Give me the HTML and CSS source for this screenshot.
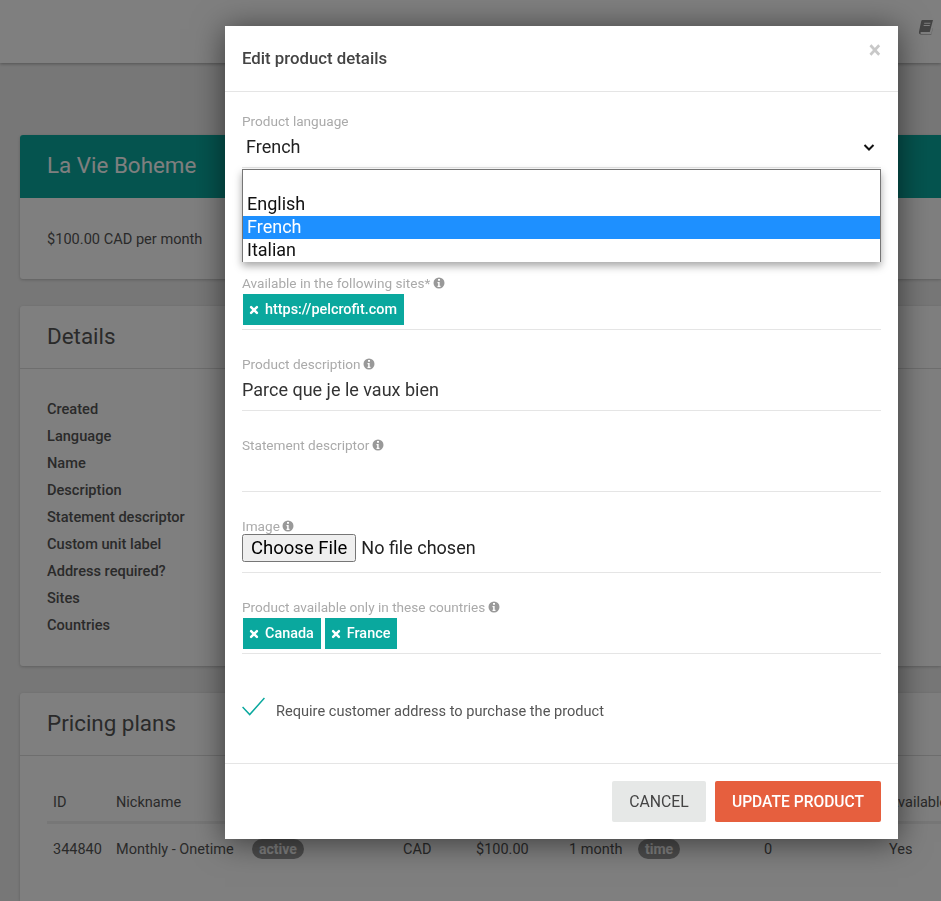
FILE: index.html
```html
<!DOCTYPE html>
<html lang="en">
<head>
<meta charset="utf-8">
<title>Edit product details</title>
<link rel="stylesheet" href="styles.css">
</head>
<body>
<svg class="sprite" width="0" height="0" aria-hidden="true">
  <symbol id="info" viewBox="0 0 24 24"><path fill="currentColor" fill-rule="evenodd" d="M12 1a11 11 0 1 0 0 22 11 11 0 0 0 0-22zM14 3.800v3.700h-4V3.800h4zM15 20H9v-2.300h1.300v-5.400H9V10h4.300v7.700H15V20z"/></symbol>
  <symbol id="times" viewBox="0 0 12 12"><path d="M2.500 2.500l7 7M9.500 2.500l-7 7" stroke="currentColor" stroke-width="3" stroke-linecap="round"/></symbol>
</svg>

<div class="page">
  <header class="navbar">
    <svg class="book" viewBox="0 0 16 16" aria-hidden="true"><path fill="currentColor" fill-rule="evenodd" d="M4.500 1H15l-.4 1.500-2.800 10.500H3.600c-.8 0-1.200.4-1.200 1s.4.900 1 .9h9.800l1.500-5.500.4-.6-1.800 6.700H3c-1.500 0-2.300-1-2-2.700L3.200 2.200C3.400 1.400 3.800 1 4.500 1zM6.300 3.800l-.2.900h6.200l.2-.9H6.300zM5.700 6l-.2.900h6.200l.2-.9H5.700z"/></svg>
  </header>
  <main class="main">
    <section class="card card-summary">
      <h1 class="banner">La Vie Boheme</h1>
      <p class="price">$100.00 CAD per month</p>
    </section>
    <section class="card card-details">
      <h2 class="card-title">Details</h2>
      <ul class="detail-list">
        <li>Created</li>
        <li>Language</li>
        <li>Name</li>
        <li>Description</li>
        <li>Statement descriptor</li>
        <li>Custom unit label</li>
        <li>Address required?</li>
        <li>Sites</li>
        <li>Countries</li>
      </ul>
    </section>
    <section class="card card-plans">
      <h2 class="card-title">Pricing plans</h2>
      <div class="plans">
        <div class="plan-row plan-head">
          <span>ID</span><span>Nickname</span><span></span><span></span><span></span><span></span><span></span><span></span><span>Available</span>
        </div>
        <div class="plan-row">
          <span>344840</span><span>Monthly - Onetime</span><span><b class="pill">active</b></span><span>CAD</span><span>$100.00</span><span>1 month</span><span><b class="pill">time</b></span><span>0</span><span>Yes</span>
        </div>
      </div>
    </section>
  </main>
</div>

<div class="overlay"></div>

<div class="modal" role="dialog">
  <div class="modal-head">
    <h3 class="modal-title">Edit product details</h3>
    <span class="close">×</span>
  </div>
  <form class="modal-body">
    <div class="select-field">
      <label class="field-label">Product language</label>
      <div class="select-value">French
        <svg class="chevron" viewBox="0 0 12 12" aria-hidden="true"><path d="M1.500 4l4.500 4.500L10.500 4" fill="none" stroke="currentColor" stroke-width="2"/></svg>
      </div>
      <ul class="listbox">
        <li class="option"></li>
        <li class="option">English</li>
        <li class="option selected">French</li>
        <li class="option">Italian</li>
      </ul>
    </div>
    <div class="field"></div>
    <div class="field">
      <label class="field-label">Available in the following sites* <svg class="info"><use href="#info"/></svg></label>
      <div class="chips">
        <span class="chip"><svg class="chip-x"><use href="#times"/></svg>https://pelcrofit.com</span>
      </div>
    </div>
    <div class="field">
      <label class="field-label">Product description <svg class="info"><use href="#info"/></svg></label>
      <div class="field-text">Parce que je le vaux bien</div>
    </div>
    <div class="field">
      <label class="field-label">Statement descriptor <svg class="info"><use href="#info"/></svg></label>
      <div class="field-text"></div>
    </div>
    <div class="field">
      <label class="field-label">Image <svg class="info"><use href="#info"/></svg></label>
      <input class="file" type="file">
    </div>
    <div class="field">
      <label class="field-label">Product available only in these countries <svg class="info"><use href="#info"/></svg></label>
      <div class="chips">
        <span class="chip"><svg class="chip-x"><use href="#times"/></svg>Canada</span>
        <span class="chip"><svg class="chip-x"><use href="#times"/></svg>France</span>
      </div>
    </div>
    <div class="check-row">
      <svg class="check" viewBox="0 0 26 20" aria-hidden="true"><path d="M1.500 10.500L9 18.500 24.500 1" fill="none" stroke="currentColor" stroke-width="1.500"/></svg>
      <span>Require customer address to purchase the product</span>
    </div>
  </form>
  <div class="modal-foot">
    <button class="btn btn-cancel" type="button">CANCEL</button>
    <button class="btn btn-update" type="button">UPDATE PRODUCT</button>
  </div>
</div>
</body>
</html>
```
FILE: styles.css
```css
* { box-sizing: border-box; }
html, body { margin: 0; height: 100%; overflow: hidden; }
body { background: #eeeeee; font-family: Roboto, "Liberation Sans", sans-serif; color: #555; font-size: 14px; }
.sprite { position: absolute; }

.page { width: 941px; height: 901px; overflow: hidden; }
.navbar { height: 63px; background: #fff; box-shadow: 0 1px 3px rgba(0,0,0,.3); display: flex; align-items: flex-start; padding: 19px 0 0 918px; }
.book { width: 16px; height: 16px; color: #888; }
.main { padding: 72px 0 0 20px; display: flex; flex-direction: column; gap: 27px; }
.card { background: #fff; border-radius: 3px 0 0 3px; box-shadow: 0 1px 3px rgba(0,0,0,.2); overflow: hidden; }
.card-summary { height: 144px; }
.card-details { height: 360px; }
.card-plans { height: 208px; border-radius: 3px 0 0 0; }
.banner { margin: 0; height: 63px; background: #0aa89e; color: #fff; font-size: 22.400px; font-weight: 400; line-height: 61px; padding-left: 27px; }
.price { margin: 0; padding: 31px 27px; line-height: 20px; font-size: 14.600px; }
.card-title { margin: 0; height: 63px; border-bottom: 1px solid #ddd; font-size: 22.400px; font-weight: 400; line-height: 60px; padding-left: 27px; }
.detail-list { list-style: none; margin: 0; padding: 27px 27px 0; }
.detail-list li { height: 27px; line-height: 27px; font-weight: 500; font-size: 14.600px; }
.plans { padding: 27px 0 0 27px; }
.plan-row { display: grid; grid-template-columns: 63px 136px 151px 73px 93px 69px 126px 125px 100px; width: 914px; height: 50px; align-items: center; white-space: nowrap; font-size: 14.500px; }
.plan-row > span { padding-left: 6px; }
.plan-head { height: 41px; border-bottom: 3px solid #eee; }
.pill { display: inline-block; height: 20px; line-height: 20px; padding: 0 7px; border-radius: 10px; background: #999; color: #fff; font-size: 14px; font-weight: 700; }

.overlay { position: fixed; inset: 0; background: rgba(0,0,0,.5); }

.modal { position: absolute; left: 225px; top: 26px; width: 673px; height: 813px; background: #fff; box-shadow: 0 3px 30px rgba(0,0,0,.55); display: flex; flex-direction: column; }
.modal-head { height: 66px; border-bottom: 1px solid #e5e5e5; padding: 0 17px 2px; display: flex; justify-content: space-between; align-items: center; position: relative; }
.modal-title { margin: 0; font-size: 16.800px; font-weight: 500; color: #444; }
.close { position: absolute; right: 17px; top: 13px; font-size: 23px; font-weight: 700; color: #c8c8c8; line-height: 24px; }
.modal-body { flex: 1; padding: 20px 17px 0; }
.field-label { display: block; height: 20px; line-height: 18px; color: #aaa; font-size: 13.600px; white-space: nowrap; }
.info { width: 12px; height: 12px; color: #999; vertical-align: -1px; margin-left: -1px; }
.select-field { position: relative; height: 56px; border-bottom: 1px solid #e5e5e5; }
.select-value { height: 32px; margin-top: -1px; line-height: 32px; padding-left: 4px; font-size: 18px; color: #222; display: flex; justify-content: space-between; align-items: center; padding-right: 6px; }
.chevron { width: 12px; height: 12px; color: #111; }
.listbox { position: absolute; left: 0; right: 0; top: 57px; height: 93px; margin: 0; padding: 0; list-style: none; background: #fff; border: 1px solid #767676; border-bottom: 0; box-shadow: 0 4px 8px rgba(0,0,0,.35); z-index: 2; }
.option { height: 23px; line-height: 22px; padding: 0 4px; font-size: 18px; color: #111; }
.selected { background: #1e90ff; color: #fff; }
.field { height: 81px; padding-top: 25px; border-bottom: 1px solid #e5e5e5; }
.field-text { font-size: 18px; line-height: 30px; height: 30px; color: #333; }
.chips { display: flex; gap: 4px; padding: 0 1px; }
.chip { display: flex; align-items: center; height: 31px; background: #0aa89e; color: #fff; font-size: 14.400px; font-weight: 500; padding: 0 7px 0 6px; }
.chip-x { width: 10px; height: 10px; color: #fff; margin-right: 6px; margin-left: 0; }
.file { display: block; margin-top: -3px; font: 18px Roboto, sans-serif; color: #222; width: 100%; }
.file::file-selector-button { padding: 1px 7px; margin-right: 5px; font-family: inherit; font-size: 18.500px; }
.check-row { display: flex; align-items: center; gap: 10px; margin-top: 47px; font-size: 14.600px; color: #555; margin-left: -1px; }
.check { width: 25px; height: 19px; color: #0aa89e; position: relative; top: -4px; }
.modal-foot { height: 76px; border-top: 1px solid #e5e5e5; padding: 17px 17px 0; display: flex; justify-content: flex-end; gap: 9px; }
.btn { height: 41px; border: 0; border-radius: 2px; font: 15.800px Roboto, sans-serif; }
.btn-cancel { width: 94px; background: #e6e8e7; color: #444; }
.btn-update { width: 166px; background: #e65f3e; color: #fff; font-weight: 500; font-size: 15.600px; }
```
